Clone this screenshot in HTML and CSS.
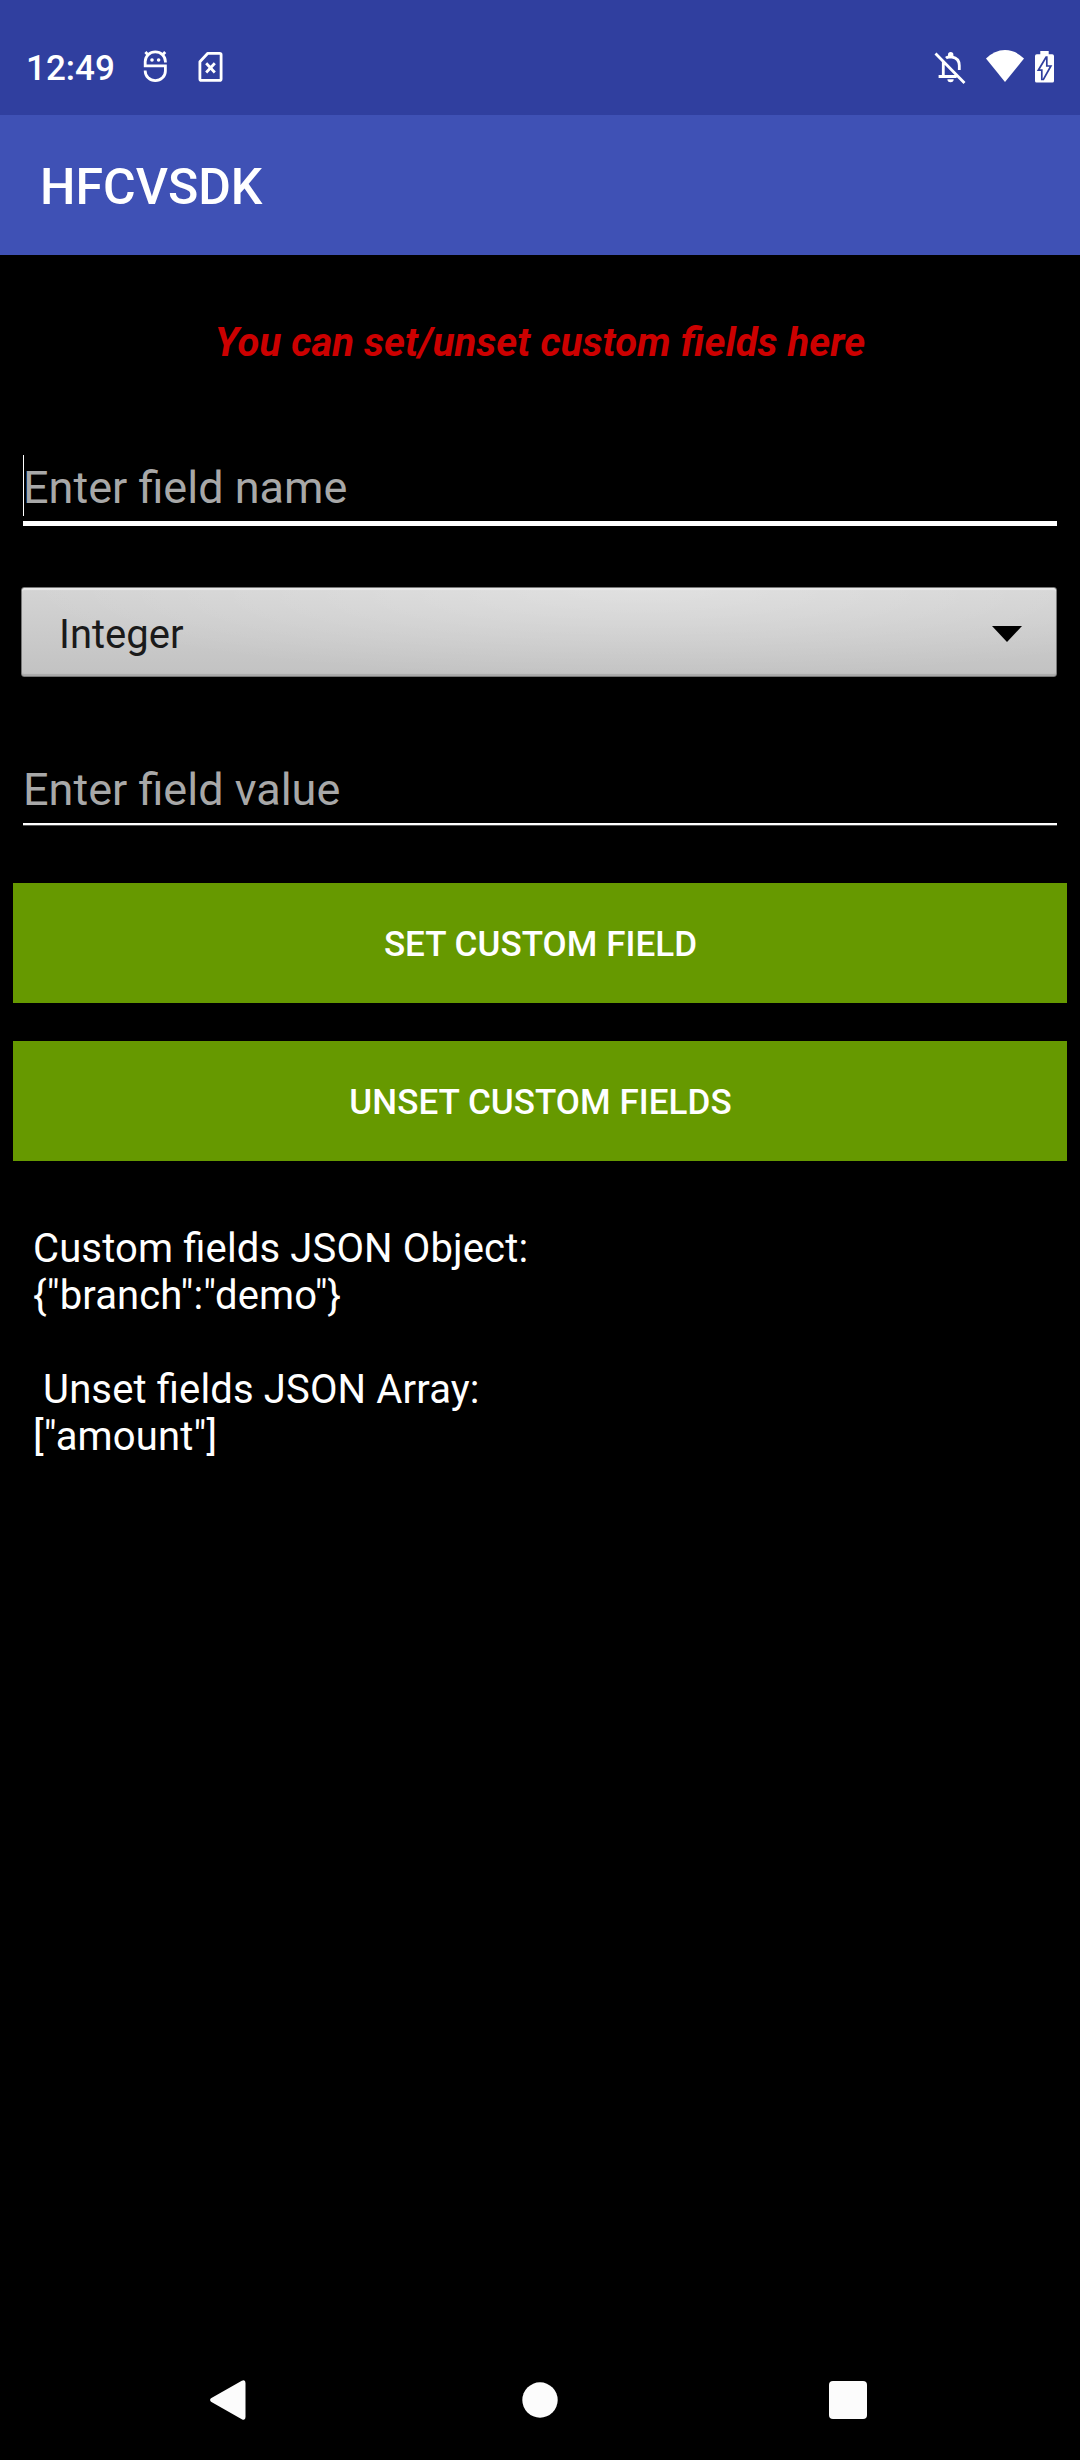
FILE: index.html
```html
<!DOCTYPE html>
<html lang="en">
<head>
<meta charset="utf-8">
<title>HFCVSDK</title>
<link rel="stylesheet" href="styles.css">
</head>
<body>
<header class="status">
  <span class="clock">12:49</span>
  <svg class="debug" width="24" height="34" viewBox="0 0 24 34" fill="none" stroke="#fff" stroke-width="2.8">
    <path d="M2.400 2l3.600 4M22.200 2l-3.600 4M22.400 12.500V11.500a10.100 9.700 0 0 0-20.200 0v4.400h20.200v5a10.100 9.800 0 0 1-20.200 0V20.600"/>
    <circle cx="9" cy="10" r="1.800" fill="#fff" stroke="none"/>
    <circle cx="15.600" cy="10" r="1.800" fill="#fff" stroke="none"/>
  </svg>
  <svg class="sim" width="26" height="32" viewBox="0 0 26 32" fill="none" stroke="#fff" stroke-width="2.8">
    <path d="M9.800 2.300h11.900q1.400 0 1.400 1.400v24.200q0 1.400-1.400 1.400H3.300q-1.400 0-1.400-1.400V10.700z" stroke-linejoin="round"/>
    <path d="M8.200 12.300l8.600 9.200M16.800 12.300l-8.600 9.200"/>
  </svg>
  <svg class="bell" width="32" height="34" viewBox="0 0 32 34" fill="none" stroke="#fff" stroke-width="2.8">
    <path d="M1.500 3.500L30.500 33M9.300 12.200V26M4.600 26.500h18M12 8.100q1-.9 3-1.100h3q7.300 1.300 7.300 8.600V20"/>
    <path d="M14 7V4.700a2.700 2.700 0 0 1 5.400 0V7zM13.400 29.300h6.300a3.100 3 0 0 1-6.300 0z" fill="#fff" stroke="none"/>
  </svg>
  <svg class="wifi" width="38" height="32" viewBox="0 0 38 32" fill="#fff">
    <path d="M0 8.600Q8.500 0 19 0t19 8.600L19 32z"/>
  </svg>
  <svg class="battery" width="19" height="32" viewBox="0 0 19 32">
    <path d="M5.300 0h8.400v3.200h3.500q1.800 0 1.800 1.800v25q0 1.600-1.600 1.600H1.600Q0 31.600 0 30V5q0-1.800 1.800-1.800h3.500z" fill="#fff"/>
    <path d="M11.200 6L3.300 19.200h3.500v9.300h1.600l7.500-13.500h-4.100V6z" fill="#fff" stroke="#303f9f" stroke-width="1.700"/>
  </svg>
</header>
<div class="appbar"><h1>HFCVSDK</h1></div>
<main>
  <h2>You can set/unset custom fields here</h2>
  <div class="field focused"><i class="caret"></i>Enter field name</div>
  <div class="spinner">
    <span>Integer</span>
    <svg width="30" height="16" viewBox="0 0 30 16"><path d="M0 0h30L15 16z"/></svg>
  </div>
  <div class="field value">Enter field value</div>
  <div class="buttons">
    <button type="button">SET CUSTOM FIELD</button>
    <button type="button">UNSET CUSTOM FIELDS</button>
  </div>
  <pre class="output">Custom fields JSON Object:
{"branch":"demo"}

 Unset fields JSON Array:
["amount"]</pre>
</main>
<nav class="nav">
  <svg width="36" height="40" viewBox="0 0 36 40"><path d="M1 18.300L31.800.7Q35.500-1 35.500 3v34q0 4-3.700 2.300L1 21.700q-1.800-1.700 0-3.400z"/></svg>
  <svg width="36" height="36" viewBox="0 0 36 36"><circle cx="18" cy="18" r="17.700"/></svg>
  <svg width="38" height="38" viewBox="0 0 38 38"><rect width="38" height="38" rx="4"/></svg>
</nav>
</body>
</html>
```

FILE: styles.css
```css
* { box-sizing: border-box; }

body {
  margin: 0;
  width: 1080px;
  height: 2460px;
  display: flex;
  flex-direction: column;
  overflow: hidden;
  background: #000;
  color: #fff;
  font: 40px/47px Roboto, sans-serif;
  font-feature-settings: "liga" 1;
}

svg { display: block; flex: none; }

.status {
  height: 115px;
  padding: 50px 26px 0;
  display: flex;
  align-items: flex-start;
  background: #303f9f;
}

.clock {
  width: 90px;
  margin: -2px 27px 0 0;
  font-size: 35px;
  line-height: 42px;
  font-weight: 500;
}

.sim { margin: 1px 0 0 31px; }
.bell { margin-left: auto; }
.wifi { margin-left: 20px; }
.battery { margin: 1px 0 0 11px; }

.appbar {
  height: 140px;
  padding: 3px 40px 0;
  display: flex;
  align-items: center;
  background: #3f51b5;
}

h1 {
  margin: 0;
  font-size: 50px;
  line-height: 60px;
  font-weight: 500;
}

main {
  flex: 1;
  display: flex;
  flex-direction: column;
}

h2 {
  margin: 64px 0 0;
  font-size: 40px;
  line-height: 47px;
  font-weight: 700;
  font-style: italic;
  letter-spacing: .06px;
  text-align: center;
  color: #c00;
}

.field {
  position: relative;
  margin: 89px 23px 0;
  height: 71px;
  border-bottom: 5px solid #fff;
  font-size: 45px;
  line-height: 65px;
  color: #a8a8a8;
}

.caret {
  position: absolute;
  left: 0;
  top: 0;
  width: 1px;
  height: 61px;
  background: #fff;
}

.spinner {
  margin: 61px 23px 0 21px;
  height: 90px;
  padding: 4px 34px 0 37px;
  display: flex;
  align-items: center;
  justify-content: space-between;
  border: 1px solid #777;
  border-radius: 3px;
  background:
    radial-gradient(ellipse 620px 90px at 60% 0, rgba(255, 255, 255, .3), transparent),
    linear-gradient(#d4d4d4, #c2c2c2);
  box-shadow: inset 0 2px 1px #e8e8e8, inset 0 -2px 1px #aaa;
  color: #1a1a1a;
}

.field.value {
  margin-top: 80px;
  height: 68px;
  border-bottom-width: 2px;
  box-shadow: 0 1px #555;
}

.buttons {
  margin: 58px 13px 0;
  display: grid;
  gap: 38px;
}

button {
  height: 120px;
  margin: 0;
  padding: 3px 0 0 1px;
  border: 0;
  background: #690;
  color: #fff;
  font: 500 35px/42px Roboto, sans-serif;
  letter-spacing: .05px;
}

.output {
  margin: 64px 33px 0;
  font: 40px/47px Roboto, sans-serif;
  font-feature-settings: "liga" 1;
  letter-spacing: .14px;
}

.nav {
  height: 120px;
  padding: 0 213px 0 209.5px;
  display: grid;
  grid-template-columns: 1fr 36px 1fr;
  align-items: center;
  fill: #fcfcfc;
}

.nav svg:nth-child(2) { margin-left: 2px; }
.nav svg:last-child { justify-self: end; }
```
